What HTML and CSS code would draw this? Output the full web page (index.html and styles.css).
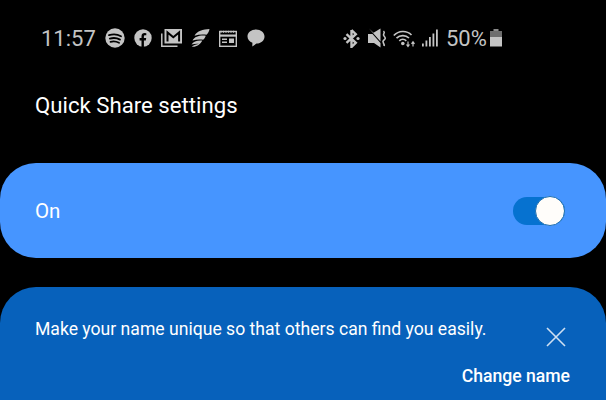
FILE: index.html
```html
<!DOCTYPE html>
<html lang="en">

<head>
    <meta charset="UTF-8">
    <meta name="viewport" content="width=device-width, initial-scale=1.0">
    <title>Quick Share settings</title>
    <link rel="stylesheet" href="styles.css">
</head>

<body>
    <div class="status-bar">
        <div class="status-left">
            <span class="clock">11:57</span>
            <!-- spotify -->
            <svg class="icon" width="20" height="20" viewBox="0 0 20 20">
                <circle cx="10" cy="10" r="9.7" fill="#c4c4c4"/>
                <path d="M4 7.200c4-1.200 8.500-.9 12 1M4.800 10.600c3.500-1 7.200-.7 10.200 1M5.500 13.800c3-.8 5.800-.5 8.500 1" fill="none" stroke="#000" stroke-width="1.800" stroke-linecap="round"/>
            </svg>
            <!-- facebook -->
            <svg class="icon" width="18" height="18" viewBox="0 0 18 18">
                <circle cx="9" cy="9" r="8.700" fill="#c4c4c4"/>
                <path d="M7.500 18v-6.600H5.600V9h1.900V7.200c0-2.100 1.300-3.100 3-3.100l1.800.1v2h-1.100c-.9 0-1.300.5-1.300 1.200V9h2.300l-.4 2.400h-1.900V18z" fill="#000"/>
            </svg>
            <!-- mail -->
            <svg class="icon" width="21" height="18" viewBox="0 0 21 18">
                <path d="M.8 4.500v12.700h15.700" fill="none" stroke="#c4c4c4" stroke-width="1.500"/>
                <rect x="3.500" y="0" width="17.500" height="14.500" fill="#c4c4c4"/>
                <path d="M6.500 12.500V3.500l5.800 4.800 5.800-4.800v9" fill="none" stroke="#000" stroke-width="2"/>
            </svg>
            <!-- wing -->
            <svg class="icon" width="19" height="18" viewBox="0 0 19 18">
                <path d="M18.500 0C12 .6 6 1.800 3.500 6.800 7.500 5.500 11.800 5.200 15.500 5.800 17.300 4.200 18.200 2.200 18.500 0z" fill="#c4c4c4"/>
                <path d="M14.800 6.700C9.500 6 3.800 7 1.500 11.600c3.500-1 7-1.300 10.600-.8 1.300-1.100 2.200-2.600 2.700-4.100z" fill="#c4c4c4"/>
                <path d="M11.300 11.500C7 11 2.300 12 .5 15.500c2.600-.8 5-1 7.500-.7-2.300.5-5 1.200-7.300 2.900 4.500.6 8.800-2.200 10.600-6.200z" fill="#c4c4c4"/>
            </svg>
            <!-- news -->
            <svg class="icon" width="18" height="17" viewBox="0 0 18 17">
                <rect x=".7" y="1.500" width="16.600" height="14.800" fill="none" stroke="#c4c4c4" stroke-width="1.400"/>
                <path d="M2 .8v2M4.500.8v2M7 .8v2M9.500.8v2M12 .8v2M14.500.8v2" stroke="#c4c4c4" stroke-width="1.200"/>
                <rect x="1" y="4.500" width="16" height="2.200" fill="#c4c4c4"/>
                <rect x="3" y="8.500" width="5" height="1.500" fill="#c4c4c4"/>
                <rect x="3" y="11.500" width="5" height="1.500" fill="#c4c4c4"/>
                <rect x="10" y="8.500" width="5" height="4.500" fill="#c4c4c4"/>
            </svg>
            <!-- message -->
            <svg class="icon msg-icon" width="18" height="18" viewBox="0 0 18 18">
                <path d="M9 .5c4.800 0 8.500 3 8.500 7 0 3.900-3.400 7-8 7.100L5.300 17.500l.1-3.700C2.500 12.600.5 10.300.5 7.500c0-4 3.700-7 8.500-7z" fill="#c4c4c4"/>
            </svg>
        </div>
        <div class="status-right">
            <!-- bluetooth -->
            <svg class="icon" width="17" height="19" viewBox="0 0 17 19">
                <path d="M8.500 1v17l4.300-4.200L3.500 5.200M8.500 1l4.300 4.200-9.300 8.600" fill="none" stroke="#c4c4c4" stroke-width="2.400"/>
                <circle cx="2" cy="9.500" r="1.600" fill="#c4c4c4"/>
                <circle cx="15" cy="9.500" r="1.600" fill="#c4c4c4"/>
            </svg>
            <!-- muted -->
            <svg class="icon" width="19" height="20" viewBox="0 0 19 20">
                <path d="M0 6h4.500L12.500 15v4.500L6 15H0z" fill="#c4c4c4"/>
                <path d="M1 .5l11.500 13V.5L5.500 4.800z" fill="#c4c4c4"/>
                <path d="M15.500 3c2.500 2-1.500 3 .5 5s1.500 3-.5 4.500 1.500 3 .5 5.500" fill="none" stroke="#c4c4c4" stroke-width="1.600"/>
            </svg>
            <!-- wifi -->
            <svg class="icon" width="23" height="19" viewBox="0 0 23 19">
                <path d="M.8 6.500C5.500 1.500 13.500 1 18.500 6M3.500 9.200c3.500-3.400 9-3.500 12.500-.2M6.300 11.800c2-1.800 5-1.800 7 0" fill="none" stroke="#c4c4c4" stroke-width="1.700"/>
                <circle cx="9.800" cy="14.500" r="1.800" fill="#c4c4c4"/>
                <path d="M15 12.500v4.500M13.500 15.500l1.500 2 1.500-2M20 17.500V13M18.500 14.800l1.500-2 1.500 2" fill="none" stroke="#c4c4c4" stroke-width="1.200"/>
            </svg>
            <!-- signal -->
            <svg class="icon" width="16" height="18" viewBox="0 0 16 18">
                <rect x="0" y="14.500" width="1.800" height="3" fill="#c4c4c4"/>
                <rect x="3.500" y="11.500" width="1.800" height="6" fill="#c4c4c4"/>
                <rect x="7" y="8" width="1.800" height="9.500" fill="#c4c4c4"/>
                <rect x="10.500" y="4.500" width="1.800" height="13" fill="#c4c4c4"/>
                <rect x="14" y=".5" width="1.800" height="17" fill="#c4c4c4"/>
            </svg>
            <span class="battery-text">50%</span>
            <svg class="icon" width="12" height="18" viewBox="0 0 12 18">
                <rect x="3.500" y="0" width="5" height="2" fill="#8a8a8a"/>
                <rect x="0" y="2" width="12" height="6" fill="#6e6e6e"/>
                <rect x="0" y="8" width="12" height="9.500" fill="#c4c4c4"/>
            </svg>
        </div>
    </div>

    <h1 class="page-title">Quick Share settings</h1>

    <div class="switch-card">
        <span>On</span>
        <div class="toggle"><div class="toggle-thumb"></div></div>
    </div>

    <div class="tip-card">
        <div class="tip-row">
            <p>Make your name unique so that others can find you easily.</p>
            <svg class="tip-close" width="20" height="20" viewBox="0 0 20 20">
                <path d="M1 1l18 18M19 1L1 19" fill="none" stroke="#cfe0f2" stroke-width="1.600"/>
            </svg>
        </div>
        <div class="tip-action">Change name</div>
    </div>
</body>

</html>
```

FILE: styles.css
```css
html,
body {
    height: 100%;
}

body {
    margin: 0;
    background-color: #000;
    color: #fff;
    font-family: Roboto, 'Liberation Sans', sans-serif;
    overflow: hidden;
}

.status-bar {
    display: flex;
    align-items: center;
    height: 28px;
    padding: 24px 0 0 41px;
    color: #c4c4c4;
}

.status-left {
    display: flex;
    align-items: center;
    gap: 9px;
    width: 302px;
}

.clock {
    width: 55px;
    font-size: 22px;
    white-space: nowrap;
}

.msg-icon {
    margin-left: 1px;
}

.status-right {
    display: flex;
    align-items: center;
    gap: 6px;
}

.status-right .icon:nth-child(2) {
    margin-left: 2px;
}

.battery-text {
    width: 40px;
    margin-left: 2px;
    margin-right: -2px;
    font-size: 22px;
}

.icon {
    display: block;
    flex: none;
}

.page-title {
    margin: 0;
    padding: 38px 0 0 35px;
    height: 33px;
    font-size: 22.2px;
    line-height: 30px;
    font-weight: 400;
    color: #fff;
}

.switch-card {
    display: flex;
    align-items: center;
    justify-content: space-between;
    height: 95px;
    margin-top: 40px;
    padding: 0 41px 0 35px;
    background-color: #4695ff;
    border-radius: 36px;
    font-size: 20.5px;
}

.toggle {
    position: relative;
    width: 52px;
    height: 28px;
    border-radius: 14px;
    background-color: #0672d0;
}

.toggle-thumb {
    position: absolute;
    right: 0;
    top: -1px;
    box-sizing: border-box;
    width: 30px;
    height: 30px;
    border: 1px solid #1f6fb0;
    border-radius: 50%;
    background-color: #fffdfa;
}

.tip-card {
    box-sizing: border-box;
    height: 113px;
    margin-top: 29px;
    padding: 29px 36px 0 35px;
    background-color: #0761bb;
    border-radius: 36px 36px 0 0;
}

.tip-row {
    display: flex;
    justify-content: space-between;
    align-items: flex-start;
}

.tip-row p {
    margin: 0;
    font-size: 17.6px;
    line-height: 26px;
}

.tip-close {
    flex: none;
    margin-top: 11px;
    margin-right: 4px;
}

.tip-action {
    margin-top: 17px;
    text-align: right;
    font-size: 17.6px;
    font-weight: 500;
    line-height: 24px;
}
```
